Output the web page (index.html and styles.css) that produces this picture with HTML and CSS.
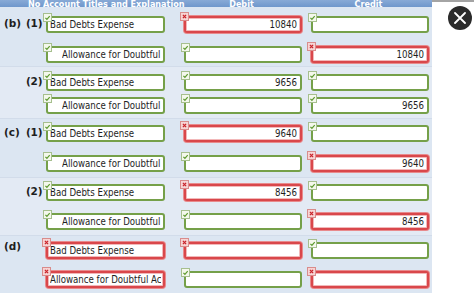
FILE: index.html
```
<!DOCTYPE html>
<html>
<head>
<meta charset="utf-8">
<link rel="stylesheet" href="styles.css">
</head>
<body>
<svg class="defs" width="0" height="0">
  <symbol id="ok" viewBox="0 0 9 9">
    <rect x="0.5" y="0.5" width="8" height="8" fill="#f4f8ec" stroke="#a6bf8e"/>
    <path d="M2.4 4.9l1.5 1.4 2.8-3.2" fill="none" stroke="#5e9a30" stroke-width="1.2"/>
  </symbol>
  <symbol id="bad" viewBox="0 0 9 9">
    <rect x="0.5" y="0.5" width="8" height="8" fill="#f7d4d4" stroke="#d88c8c"/>
    <path d="M2.9 2.9l3.2 3.2M6.1 2.9l-3.2 3.2" fill="none" stroke="#c9242b" stroke-width="1.3"/>
  </symbol>
</svg>
<div class="page">
  <div class="sheet">
    <div class="head">
      <span class="h-no">No</span>
      <span class="h-acct">Account Titles and Explanation</span>
      <span class="h-col">Debit</span>
      <span class="h-col">Credit</span>
    </div>

    <div class="group g1">
      <div class="row">
        <span class="lbl">(b)</span><span class="sub">(1)</span>
        <div class="field ok"><svg class="mark"><use href="#ok"/></svg><span class="txt">Bad Debts Expense</span></div>
        <div class="field bad num"><svg class="mark"><use href="#bad"/></svg><span class="txt">10840</span></div>
        <div class="field ok num"><svg class="mark"><use href="#ok"/></svg></div>
      </div>
      <div class="row">
        <span class="lbl"></span><span class="sub"></span>
        <div class="field ok indent"><svg class="mark"><use href="#ok"/></svg><span class="txt">Allowance for Doubtful</span></div>
        <div class="field ok num"><svg class="mark"><use href="#ok"/></svg></div>
        <div class="field bad num"><svg class="mark"><use href="#bad"/></svg><span class="txt">10840</span></div>
      </div>
    </div>

    <div class="group g2">
      <div class="row">
        <span class="lbl"></span><span class="sub">(2)</span>
        <div class="field ok"><svg class="mark"><use href="#ok"/></svg><span class="txt">Bad Debts Expense</span></div>
        <div class="field ok num"><svg class="mark"><use href="#ok"/></svg><span class="txt">9656</span></div>
        <div class="field ok num"><svg class="mark"><use href="#ok"/></svg></div>
      </div>
      <div class="row">
        <span class="lbl"></span><span class="sub"></span>
        <div class="field ok indent"><svg class="mark"><use href="#ok"/></svg><span class="txt">Allowance for Doubtful</span></div>
        <div class="field ok num"><svg class="mark"><use href="#ok"/></svg></div>
        <div class="field ok num"><svg class="mark"><use href="#ok"/></svg><span class="txt">9656</span></div>
      </div>
    </div>

    <div class="group g3">
      <div class="row">
        <span class="lbl">(c)</span><span class="sub">(1)</span>
        <div class="field ok"><svg class="mark"><use href="#ok"/></svg><span class="txt">Bad Debts Expense</span></div>
        <div class="field bad num"><svg class="mark"><use href="#bad"/></svg><span class="txt">9640</span></div>
        <div class="field ok num"><svg class="mark"><use href="#ok"/></svg></div>
      </div>
      <div class="row">
        <span class="lbl"></span><span class="sub"></span>
        <div class="field ok indent"><svg class="mark"><use href="#ok"/></svg><span class="txt">Allowance for Doubtful</span></div>
        <div class="field ok num"><svg class="mark"><use href="#ok"/></svg></div>
        <div class="field bad num"><svg class="mark"><use href="#bad"/></svg><span class="txt">9640</span></div>
      </div>
    </div>

    <div class="group g4">
      <div class="row">
        <span class="lbl"></span><span class="sub">(2)</span>
        <div class="field ok"><svg class="mark"><use href="#ok"/></svg><span class="txt">Bad Debts Expense</span></div>
        <div class="field bad num"><svg class="mark"><use href="#bad"/></svg><span class="txt">8456</span></div>
        <div class="field ok num"><svg class="mark"><use href="#ok"/></svg></div>
      </div>
      <div class="row">
        <span class="lbl"></span><span class="sub"></span>
        <div class="field ok indent"><svg class="mark"><use href="#ok"/></svg><span class="txt">Allowance for Doubtful</span></div>
        <div class="field ok num"><svg class="mark"><use href="#ok"/></svg></div>
        <div class="field bad num"><svg class="mark"><use href="#bad"/></svg><span class="txt">8456</span></div>
      </div>
    </div>

    <div class="group g5">
      <div class="row">
        <span class="lbl up">(d)</span><span class="sub"></span>
        <div class="field bad"><svg class="mark"><use href="#bad"/></svg><span class="txt">Bad Debts Expense</span></div>
        <div class="field bad num"><svg class="mark"><use href="#bad"/></svg></div>
        <div class="field ok num"><svg class="mark"><use href="#ok"/></svg></div>
      </div>
      <div class="row">
        <span class="lbl"></span><span class="sub"></span>
        <div class="field bad"><svg class="mark"><use href="#bad"/></svg><span class="txt">Allowance for Doubtful Accounts</span></div>
        <div class="field ok num"><svg class="mark"><use href="#ok"/></svg></div>
        <div class="field bad num"><svg class="mark"><use href="#bad"/></svg></div>
      </div>
    </div>
  </div>

  <aside class="side">
    <div class="topband"></div>
    <button class="close" aria-label="Close">
      <svg width="12" height="12" viewBox="0 0 12 12"><path d="M1 1l10 10M11 1L1 11" stroke="#fff" stroke-width="1.8" stroke-linecap="round"/></svg>
    </button>
  </aside>
</div>
</body>
</html>
```

FILE: styles.css
```
* { box-sizing: border-box; }

html, body {
  margin: 0;
  padding: 0;
  background: #ffffff;
}

.defs { position: absolute; width: 0; height: 0; }

.page {
  display: flex;
  width: 474px;
  height: 293px;
  overflow: hidden;
  font-family: "DejaVu Sans Condensed", "DejaVu Sans", Verdana, sans-serif;
  font-stretch: semi-condensed;
  color: #1e1e1e;
}

.sheet {
  width: 432px;
  flex: none;
  background: #dce6f2;
}

/* header strip, text cut off at the top */
.head {
  height: 7px;
  overflow: hidden;
  display: flex;
  align-items: flex-end;
  background: linear-gradient(#88aad6, #6f97cc);
  color: #ffffff;
  font-weight: bold;
  font-size: 9px;
  line-height: 10px;
  white-space: nowrap;
}
.head span { margin-bottom: -2px; flex: none; }
.h-no { margin-left: 28px; width: 15px; }
.h-acct { width: 135px; text-align: center; }
.h-col { width: 127px; text-align: center; }

.group {
  display: flex;
  flex-direction: column;
  gap: 12px;
  padding: 6px 0 6px;
  border-bottom: 1px solid #d2dcea;
}
.group:nth-child(odd) { background: #e3eaf4; }
.g1 { padding-top: 9px; padding-bottom: 3px; gap: 13px; }
.g2 { padding-top: 7px; padding-bottom: 4px; gap: 6px; }
.g3 { gap: 13px; padding-bottom: 5px; }
.g4 { padding-bottom: 5px; }
.g5 { padding-top: 6px; border-bottom: none; }

.row {
  display: grid;
  grid-template-columns: 26px 20px 119px 137px 127px;
  align-items: center;
  height: 17px;
}

.lbl, .sub {
  font-weight: bold;
  font-size: 10.5px;
  font-stretch: normal;
  font-family: "DejaVu Sans", Verdana, sans-serif;
  white-space: nowrap;
  align-self: center;
  margin-top: -3px;
}
.lbl { padding-left: 4px; }
.sub { padding-left: 0; letter-spacing: -0.2px; }
.lbl.up { margin-top: -9px; }

.field {
  position: relative;
  height: 17px;
  background: #ffffff;
  border: 2px solid #75a049;
  border-radius: 3px;
  font-size: 9.6px;
  line-height: 13px;
  padding: 0 2px;
  white-space: nowrap;
}
.field .txt {
  display: block;
  overflow: hidden;
}
.field.indent { padding-left: 14px; }
.field.num {
  width: 118px;
  justify-self: end;
  text-align: right;
  padding-right: 3px;
}
.field.bad {
  border-color: #d9474b;
  box-shadow: 0 0 0 1px #e88a8c, inset 0 0 0 1px #f2b8b9;
}

.mark {
  position: absolute;
  left: -5px;
  top: -5px;
  width: 9px;
  height: 9px;
}
.field.bad .mark { left: -6px; top: -6px; }

.side {
  flex: 1;
  position: relative;
  display: flex;
  flex-direction: column;
  align-items: flex-end;
}
.topband {
  align-self: stretch;
  height: 2px;
  background: #a4a4a4;
}
.close {
  margin: 4px 2px 0 0;
  width: 24px;
  height: 24px;
  border-radius: 50%;
  border: none;
  padding: 0;
  background: #2b2b2b;
  display: flex;
  align-items: center;
  justify-content: center;
}
```
